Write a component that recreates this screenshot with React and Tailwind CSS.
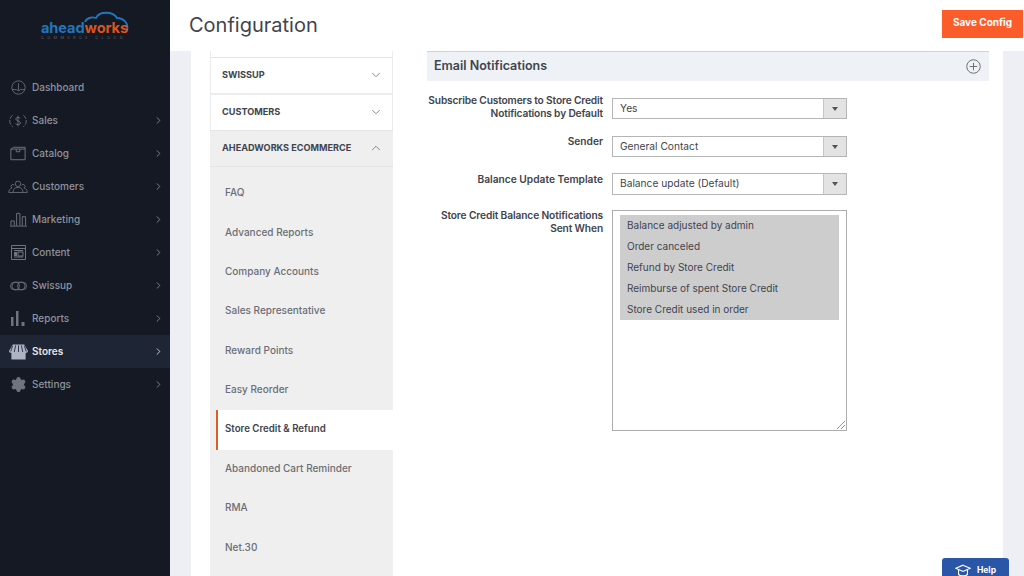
import { ChevronRight, ChevronDown, ChevronUp, Settings } from "lucide-react";

const icons = {
    dashboard: (
        <svg viewBox="0 0 18 18" className="w-[15px] h-[15px]" fill="none" stroke="currentColor" strokeWidth="1">
            <circle cx="9" cy="9" r="8" />
            <path d="M1.5 11.5 H6.5 L9 13 L11.5 11.5 H16.5 M9 4 V12.5" />
        </svg>
    ),
    sales: (
        <svg viewBox="0 0 20 18" className="w-[18px] h-[16px]" fill="none" stroke="currentColor" strokeWidth="1">
            <path d="M4 2.5 A8 8 0 0 0 4 15.5 M16 2.5 A8 8 0 0 1 16 15.5" strokeDasharray="5 1.5" />
            <path d="M12.5 6 C11.5 4.5 7.5 4.6 7.5 6.8 C7.5 9.2 12.8 8.6 12.8 11.2 C12.8 13.5 8.5 13.6 7.2 12 M10 3 V15" />
        </svg>
    ),
    catalog: (
        <svg viewBox="0 0 18 16" className="w-[16px] h-[15px]" fill="none" stroke="currentColor" strokeWidth="1.1">
            <path d="M1 3 H17 V15 H1 Z M1 3 L4 1 H17 V3 M7 3 V6 H11 V3" />
        </svg>
    ),
    customers: (
        <svg viewBox="0 0 22 15" className="w-[20px] h-[14px]" fill="none" stroke="currentColor" strokeWidth="0.9">
            <circle cx="11" cy="4" r="3" />
            <path d="M5.5 13.5 C6 9 8 8 11 8 C14 8 16 9 16.5 13.5 Z" />
            <path d="M7 5.5 A2 2 0 1 0 4.5 8.5 C2 9 1 11 0.8 13.5 H5.5 M15 5.5 A2 2 0 1 1 17.5 8.5 C20 9 21 11 21.2 13.5 H16.5" />
        </svg>
    ),
    marketing: (
        <svg viewBox="0 0 18 15" className="w-[17px] h-[15px]" fill="none" stroke="currentColor" strokeWidth="1">
            <path d="M1 14 V9 H4.5 V14 M7 14 V1 H10.5 V14 M13 14 V4.5 H16.5 V14 M0 14.5 H18" />
        </svg>
    ),
    content: (
        <svg viewBox="0 0 15 15" className="w-[15px] h-[15px]" fill="none" stroke="currentColor" strokeWidth="1">
            <path d="M.5 .5 H14.5 V14.5 H.5 Z M.5 3.5 H14.5 M3 5.5 H12 M3 12 H12" />
            <rect x="3" y="7" width="3" height="4" fill="currentColor" stroke="none" />
            <rect x="7" y="7" width="5" height="4" />
        </svg>
    ),
    swissup: (
        <svg viewBox="0 0 18 10" className="w-[17px] h-[10px]" fill="none" stroke="currentColor" strokeWidth="0.9">
            <rect x="0.5" y="1" width="17" height="8" rx="4" />
            <circle cx="6" cy="5" r="4" />
            <circle cx="12" cy="5" r="4" />
        </svg>
    ),
    reports: (
        <svg viewBox="0 0 14 15" className="w-[14px] h-[15px]" fill="currentColor">
            <rect x="0" y="6" width="2.5" height="9" />
            <rect x="5" y="0" width="2.5" height="15" />
            <rect x="10.5" y="11" width="3" height="4" />
        </svg>
    ),
    stores: (
        <svg viewBox="0 0 20 16" className="w-[19px] h-[16px]" fill="currentColor">
            <path d="M4 0 H16 L20 7 C20 8.5 18.5 9 17.5 9 V16 H2.5 V9 C1.5 9 0 8.5 0 7 Z" />
            <path d="M7 1 L5.5 8 M10 1 V8 M13 1 L14.5 8 M3.8 1.5 L1.8 7.5 M16.2 1.5 L18.2 7.5" stroke="#1e2534" strokeWidth="0.9" fill="none" />
        </svg>
    ),
    settings: <Settings size={17} fill="currentColor" strokeWidth={1.5} />,
};

const menu = [
    { name: "Dashboard", icon: "dashboard" },
    { name: "Sales", icon: "sales", more: true },
    { name: "Catalog", icon: "catalog", more: true },
    { name: "Customers", icon: "customers", more: true },
    { name: "Marketing", icon: "marketing", more: true },
    { name: "Content", icon: "content", more: true },
    { name: "Swissup", icon: "swissup", more: true },
    { name: "Reports", icon: "reports", more: true },
    { name: "Stores", icon: "stores", more: true, active: true },
    { name: "Settings", icon: "settings", more: true },
];

const subItems = [
    "FAQ",
    "Advanced Reports",
    "Company Accounts",
    "Sales Representative",
    "Reward Points",
    "Easy Reorder",
    "Store Credit & Refund",
    "Abandoned Cart Reminder",
    "RMA",
    "Net.30",
];

const balanceOptions = [
    "Balance adjusted by admin",
    "Order canceled",
    "Refund by Store Credit",
    "Reimburse of spent Store Credit",
    "Store Credit used in order",
];

function Field({ label, children, className, labelClass }) {
    return (
        <div className={"flex gap-[9px] " + className}>
            <div className={"w-[176px] text-right text-[10.2px] leading-[13px] font-semibold text-[#41444d] " + labelClass}>
                {label}
            </div>
            {children}
        </div>
    );
}

function SelectBox({ value, height, className = "" }) {
    return (
        <div className={"w-[235px] flex border border-[#b5b5b5] bg-white " + height + " " + className}>
            <div className="flex-1 pl-[7px] flex items-center text-[10.2px] text-[#41444d]">{value}</div>
            <div className="w-[23px] bg-[#e3e3e3] border-l border-[#c6c6c6] flex items-center justify-center">
                <div className="w-0 h-0 border-x-[3px] border-x-transparent border-t-[4px] border-t-[#555]"></div>
            </div>
        </div>
    );
}

export default function App() {
    return (
        <div className="relative flex w-[1024px] h-[576px] overflow-hidden bg-white font-['Inter',sans-serif]">
            <aside className="w-[170px] shrink-0 bg-[#141923] text-[#8f939d]">
                <div className="h-[71px] pt-[10px] pl-[41px]">
                    <div className="relative w-[90px] h-[30px]">
                        <svg viewBox="0 0 90 30" className="absolute left-0 top-0 w-[90px] h-[30px]" fill="none" stroke="#2276bc" strokeWidth="1.8">
                            <path d="M44 12 C46 7 52 7 55 8 C58 1 72 1 76 8 C82 8 88 13 86 20" />
                        </svg>
                        <div className="absolute left-0 top-[10px] text-[14.6px] leading-[16px] font-bold tracking-[-0.1px] whitespace-nowrap">
                            <span className="text-[#2276bc]">ahead</span>
                            <span className="text-[#d9551f]">works</span>
                        </div>
                        <div className="absolute left-[0px] top-[25px] text-[4px] leading-[5px] tracking-[3.3px] text-[#5d626d] whitespace-nowrap">
                            COMMERCE CLOUD
                        </div>
                    </div>
                </div>
                <nav>
                    {menu.map((item) => (
                        <div
                            key={item.name}
                            className={
                                "h-[33px] flex items-center pr-[6px] " +
                                (item.active ? "bg-[#1e2534] text-[#e6e7ea]" : "")
                            }
                        >
                            <div className={"w-[32px] pl-[8px] pr-[4px] flex justify-center shrink-0 " + (item.active ? "text-[#aeb4c6]" : "text-[#70747e]")}>
                                {icons[item.icon]}
                            </div>
                            <span className={"flex-1 text-[10px] " + (item.active ? "font-semibold" : "font-medium")}>
                                {item.name}
                            </span>
                            {item.more && <ChevronRight size={11} strokeWidth={1.8} />}
                        </div>
                    ))}
                </nav>
            </aside>

            <div className="flex-1 flex flex-col min-w-0">
                <header className="h-[51px] shrink-0 flex items-start justify-between pl-[19px] pr-[1px] pt-[10px]">
                    <h1 className="text-[20px] leading-[30px] text-[#41444d] font-normal">Configuration</h1>
                    <button className="w-[81px] h-[28px] pb-[4px] bg-[#fb5c2a] text-white text-[10px] font-bold">Save Config</button>
                </header>

                <div className="flex-1 min-h-0 bg-[#eeeff5] pl-[21px] pr-[21px]">
                    <div className="h-full bg-white flex">
                        <div className="w-[202px] pl-[19px] shrink-0">
                            <div className="h-[7px] border-b border-[#e4e4e4] border-x border-x-[#ebebeb]"></div>
                            <div className="h-[37px] pb-[2px] border-b-2 border-[#ededed] border-x border-x-[#ebebeb] flex items-center justify-between pl-[11px] pr-[9px] text-[#41444d]">
                                <span className="text-[9.15px] font-bold">SWISSUP</span>
                                <ChevronDown size={14} strokeWidth={1.5} className="text-[#777]" />
                            </div>
                            <div className="h-[36px] pb-[2px] border-b border-[#e4e4e4] border-x border-x-[#ebebeb] flex items-center justify-between pl-[11px] pr-[9px] text-[#41444d]">
                                <span className="text-[9.15px] font-bold">CUSTOMERS</span>
                                <ChevronDown size={14} strokeWidth={1.5} className="text-[#777]" />
                            </div>
                            <div className="h-[36px] pb-[2px] bg-[#efefef] border-b border-[#e4e4e4] flex items-center justify-between pl-[12px] pr-[10px] text-[#41444d]">
                                <span className="text-[9.15px] font-bold whitespace-nowrap">AHEADWORKS ECOMMERCE</span>
                                <ChevronUp size={14} strokeWidth={1.5} className="text-[#777]" />
                            </div>
                            <div className="bg-[#efefef] pt-[7px] pl-[6px] h-[410px]">
                                {subItems.map((name) => {
                                    const active = name === "Store Credit & Refund";
                                    return (
                                        <div
                                            key={name}
                                            className={
                                                "h-[39.4px] pb-[2px] flex items-center border-l-2 pl-[7px] " +
                                                (active
                                                    ? "border-[#d9601f] bg-white text-[9.7px] font-semibold text-[#41444d]"
                                                    : "border-transparent text-[10px] font-medium text-[#6b6e76]")
                                            }
                                        >
                                            {name}
                                        </div>
                                    );
                                })}
                            </div>
                        </div>

                        <div className="w-[562px] ml-[34px] shrink-0">
                            <div className="h-[30px] bg-[#eef2f7] border-t border-[#cfd2d6] flex items-center justify-between pl-[7px] pr-[8px]">
                                <span className="text-[12.5px] font-semibold text-[#41444d]">Email Notifications</span>
                                <svg viewBox="0 0 16 16" className="w-[15px] h-[15px]" fill="none" stroke="#666" strokeWidth="1">
                                    <circle cx="8" cy="8" r="7.2" />
                                    <path d="M8 4 V12 M4 8 H12" />
                                </svg>
                            </div>
                            <Field label={<>Subscribe Customers to Store Credit<br />Notifications by Default</>} className="mt-[13px]" labelClass="whitespace-nowrap tracking-[-0.15px]">
                                <SelectBox value="Yes" height="h-[21px]" className="mt-[4px]" />
                            </Field>
                            <Field label="Sender" className="mt-[16px]" labelClass="-mt-[1.5px]">
                                <SelectBox value="General Contact" height="h-[21px]" />
                            </Field>
                            <Field label="Balance Update Template" className="mt-[16px]" labelClass="-mt-[0.5px]">
                                <SelectBox value="Balance update (Default)" height="h-[22px]" />
                            </Field>
                            <Field label="Store Credit Balance Notifications Sent When" className="mt-[15px]" labelClass="-mt-[1.5px] tracking-[-0.12px]">
                                <div className="relative w-[235px] h-[221px] border border-[#adadad] pt-[4px] px-[7px]">
                                    <div className="bg-[#cdcdcd]">
                                        {balanceOptions.map((opt) => (
                                            <div key={opt} className="h-[21px] flex items-center pl-[7px] text-[10px] text-[#41444d]">
                                                {opt}
                                            </div>
                                        ))}
                                    </div>
                                    <svg viewBox="0 0 8 8" className="absolute right-[1px] bottom-[1px] w-[8px] h-[8px]" stroke="#777" strokeWidth="0.8">
                                        <path d="M0 8 L8 0 M4 8 L8 4" />
                                    </svg>
                                </div>
                            </Field>
                        </div>
                    </div>
                </div>
            </div>

            <button className="absolute left-[942px] top-[558px] w-[67px] h-[24px] bg-[#2a56a8] rounded-t-[3px] flex items-start justify-center gap-[6px] pt-[6px] text-white text-[8.5px] font-bold">
                <svg viewBox="0 0 18 14" className="w-[16px] h-[13px]" fill="none" stroke="currentColor" strokeWidth="1.2">
                    <path d="M9 1 L17 4.5 L9 8 L1 4.5 Z M4 6.5 V11.5 C6 13.5 12 13.5 14 11.5 V6.5" />
                </svg>
                Help
            </button>
        </div>
    );
}
